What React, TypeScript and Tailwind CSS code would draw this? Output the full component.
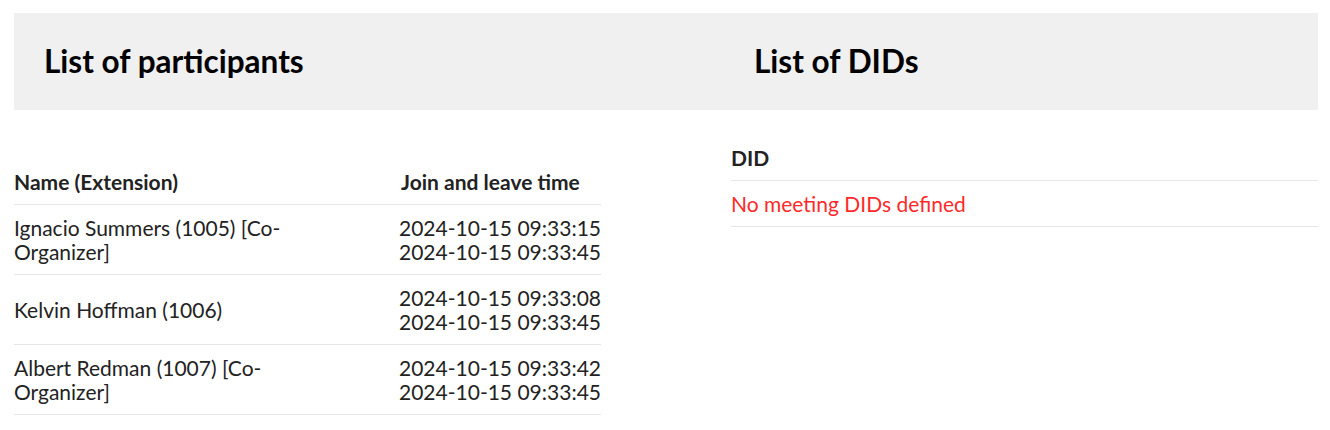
const participants = [
  { name: 'Ignacio Summers (1005) [Co-Organizer]', join: '2024-10-15 09:33:15', leave: '2024-10-15 09:33:45' },
  { name: 'Kelvin Hoffman (1006)', join: '2024-10-15 09:33:08', leave: '2024-10-15 09:33:45' },
  { name: 'Albert Redman (1007) [Co-Organizer]', join: '2024-10-15 09:33:42', leave: '2024-10-15 09:33:45' },
];

const App = () => {
  return <div className="min-h-screen bg-white pl-[14px] pr-[12px] pt-[13px] text-[#222] font-['Lato','Liberation_Sans',sans-serif]">
      <div className="flex h-[97px] items-center bg-[#f0f0f0]">
        <h2 className="w-[740px] pl-[30px] text-[31.5px] font-bold text-black">List of participants</h2>
        <h2 className="text-[31.5px] font-bold text-black">List of DIDs</h2>
      </div>

      <div className="flex justify-between">
        <table className="mt-[49px] w-[587px] border-collapse text-[21px] leading-[24px]">
          <thead>
            <tr className="border-b border-[#e6e6e6]">
              <th className="pt-[11px] pb-[10px] pr-[40px] text-left font-bold">Name (Extension)</th>
              <th className="pt-[11px] pb-[10px] text-left font-bold pl-[2px]">Join and leave time</th>
            </tr>
          </thead>
          <tbody>
            {participants.map(p => <tr key={p.name} className="border-b border-[#e6e6e6]">
                <td className="w-[385px] pt-[11px] pb-[10px] pr-[70px] align-middle">{p.name}</td>
                <td className="pt-[11px] pb-[10px] align-middle whitespace-nowrap">
                  <div>{p.join}</div>
                  <div>{p.leave}</div>
                </td>
              </tr>)}
          </tbody>
        </table>

        <table className="mt-[25px] w-[587px] border-collapse text-[21px] leading-[24px] self-start">
          <thead>
            <tr className="border-b border-[#e6e6e6]">
              <th className="pt-[11px] pb-[10px] text-left font-bold">DID</th>
            </tr>
          </thead>
          <tbody>
            <tr className="border-b border-[#e6e6e6]">
              <td className="pt-[11px] pb-[10px] text-[#ff2a2a]">No meeting DIDs defined</td>
            </tr>
          </tbody>
        </table>
      </div>
    </div>;
};
export default App;
